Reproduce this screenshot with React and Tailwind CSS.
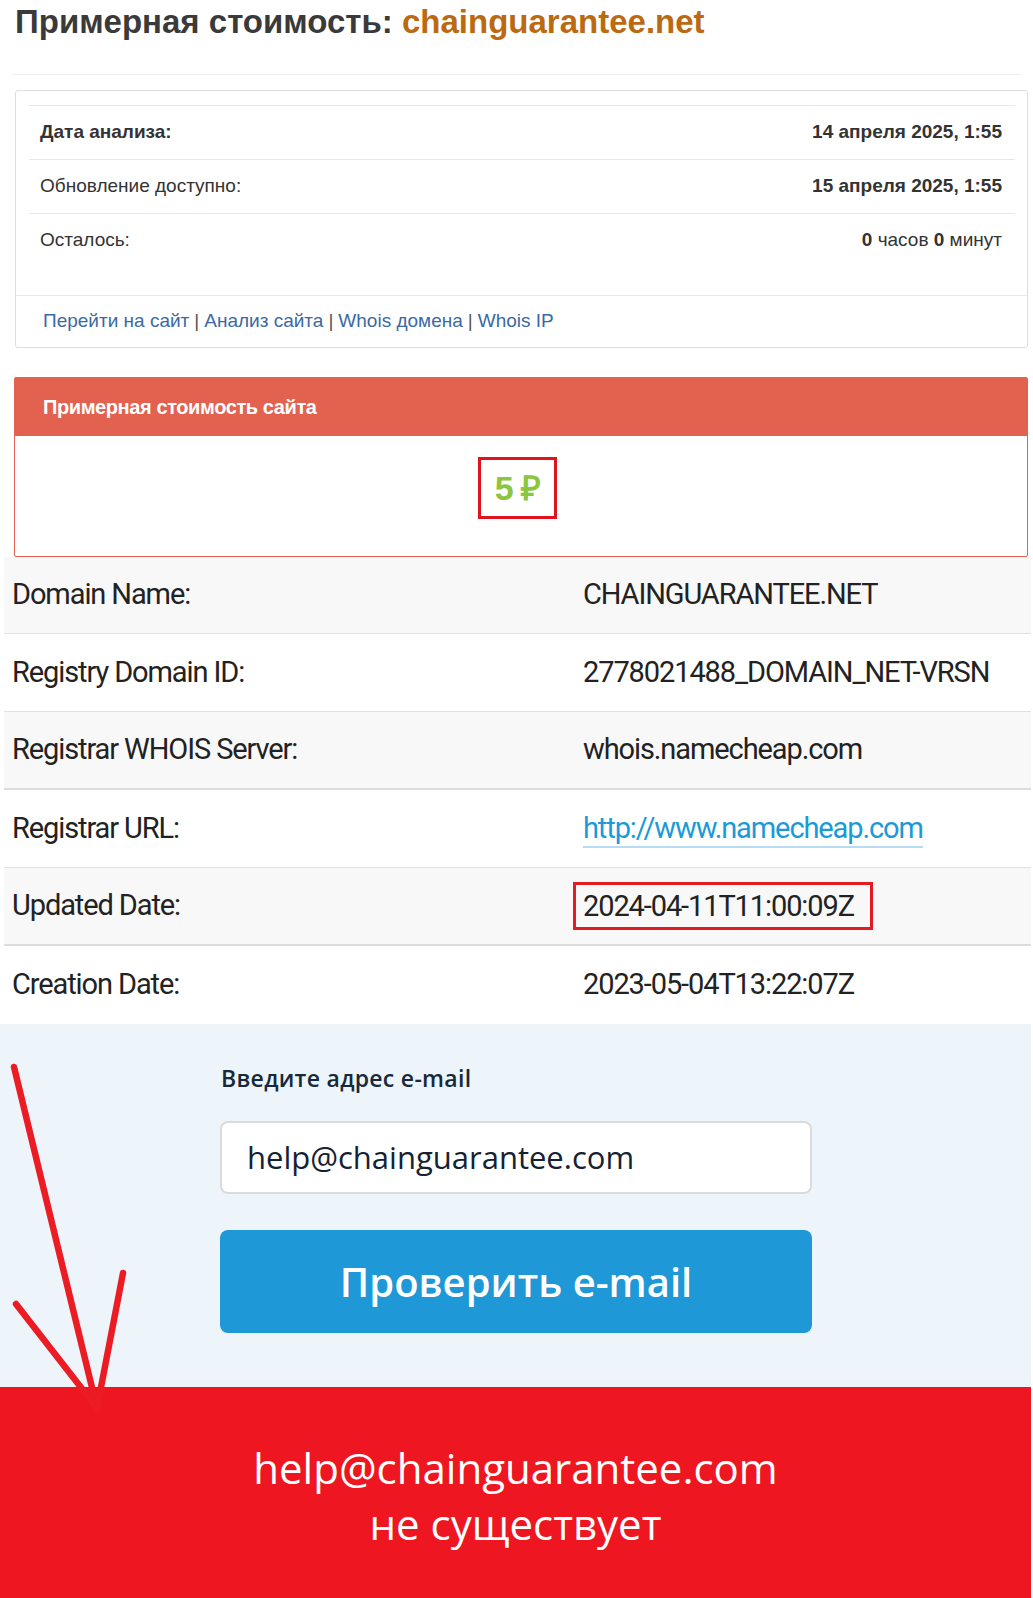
import React from 'react';

const info = [
  { label: 'Дата анализа:', bold: true, value: <b>14 апреля 2025, 1:55</b> },
  { label: 'Обновление доступно:', value: <b>15 апреля 2025, 1:55</b> },
  { label: 'Осталось:', value: <span><b>0</b> часов <b>0</b> минут</span> },
];

const links = ['Перейти на сайт', 'Анализ сайта', 'Whois домена', 'Whois IP'];

const whois = [
  { k: 'Domain Name:', v: 'CHAINGUARANTEE.NET' },
  { k: 'Registry Domain ID:', v: '2778021488_DOMAIN_NET-VRSN' },
  { k: 'Registrar WHOIS Server:', v: 'whois.namecheap.com', thick: true },
  { k: 'Registrar URL:', v: 'http://www.namecheap.com', link: true },
  { k: 'Updated Date:', v: '2024-04-11T11:00:09Z', mark: true, thick: true },
  { k: 'Creation Date:', v: '2023-05-04T13:22:07Z', last: true },
];

export default function App() {
  return (
    <div className="relative w-[1033px] min-h-[1598px] bg-white font-['Liberation_Sans',Arial,sans-serif] text-[#333]">
      {/* заголовок */}
      <div className="mx-[12px] h-[75px] border-b border-[#eeeeee]">
        <h1 className="pl-[3px] pt-[2px] text-[33px] leading-[40px] font-bold text-[#3a3a3a]">
          Примерная стоимость: <span className="text-[#bb6a12]">chainguarantee.net</span>
        </h1>
      </div>

      {/* даты анализа */}
      <div className="mt-[15px] ml-[15px] w-[1013px] h-[258px] border border-[#dddddd] rounded-[3px] flex flex-col">
        <div className="px-[13px] pt-[14px] pr-[12px] h-[204px]">
          {info.map((r, i) => (
            <div key={i} className="h-[54px] border-t border-[#e8e8e8] flex items-center justify-between pl-[11px] pr-[13px] text-[19px]">
              <span className={r.bold ? 'font-bold' : ''}>{r.label}</span>
              <span>{r.value}</span>
            </div>
          ))}
        </div>
        <div className="flex-1 border-t border-[#e8e8e8] flex items-center pl-[27px] text-[19px] text-[#555]">
          {links.map((l, i) => (
            <span key={i}>
              {i > 0 && <span className="mx-[5px]">|</span>}
              <a className="text-[#3a6aa2]">{l}</a>
            </span>
          ))}
        </div>
      </div>

      {/* стоимость */}
      <div className="mt-[29px] ml-[14px] w-[1014px] h-[180px] border border-[#e2614f] rounded-[2px] flex flex-col">
        <div className="h-[58px] bg-[#e3614f] flex items-center pl-[28px] text-white font-bold text-[20px] tracking-[-0.4px]">
          Примерная стоимость сайта
        </div>
        <div className="flex justify-center pt-[21px] pr-[7px]">
          <div className="w-[79px] h-[62px] border-[3px] border-[#e0141e] flex items-center justify-center text-[34px] font-bold text-[#8cc63e] tracking-[-1px]">
            5 ₽
          </div>
        </div>
      </div>

      {/* whois */}
      <div className="ml-[4px] w-[1027px] font-['Roboto',sans-serif] text-[29px] text-[#222] tracking-[-1.1px]">
        {whois.map((r, i) => (
          <div
            key={i}
            className={
              'flex items-center ' +
              (i === 0 ? 'h-[77px] ' : 'h-[78px] ') +
              (i % 2 === 0 ? 'bg-[#f8f8f8] ' : 'bg-white ') +
              (r.last ? '' : r.thick ? 'border-b-2 border-[#dcdcdc]' : 'border-b border-[#e2e2e2]')
            }
          >
            <div className="w-[579px] pl-[8px]">{r.k}</div>
            <div>
              {r.link ? (
                <span className="text-[#1b9ad8] border-b-2 border-[#b5dcf2] pb-[1px]">{r.v}</span>
              ) : r.mark ? (
                <span className="inline-block -ml-[10px] pl-[7px] pr-[16px] border-[3px] border-[#e31b23] leading-[42px]">{r.v}</span>
              ) : (
                r.v
              )}
            </div>
          </div>
        ))}
      </div>

      {/* проверка e-mail */}
      <div className="w-[1031px] bg-[#eef5fa] pt-[40px] pb-[54px] font-['Open_Sans',sans-serif]">
        <div className="ml-[220px] w-[592px]">
          <div className="text-[23px] leading-[29px] text-[#17293a] font-semibold tracking-[0.3px] pl-[1px]">
            Введите адрес e-mail
          </div>
          <div className="mt-[28px] h-[73px] bg-white border-2 border-[#d9dcdf] rounded-[8px] flex items-center pl-[25px] text-[31px] text-[#142233]">
            help@chainguarantee.com
          </div>
          <button className="mt-[36px] w-full h-[103px] bg-[#1e98d6] rounded-[8px] text-white text-[40px] font-semibold">
            Проверить e-mail
          </button>
        </div>
      </div>

      {/* результат */}
      <div className="w-[1031px] h-[211px] bg-[#ee1620] flex flex-col items-center pt-[53px] text-white font-['Open_Sans',sans-serif] text-[42px] leading-[56px]">
        <div>help@chainguarantee.com</div>
        <div>не существует</div>
      </div>

      {/* стрелка */}
      <svg className="absolute left-0 top-[1050px]" width="140" height="370" viewBox="0 1050 140 370">
        <g stroke="#ec1c24" strokeWidth="6.5" strokeLinecap="round" fill="none">
          <line x1="14" y1="1067" x2="97" y2="1408" />
          <line x1="16" y1="1304" x2="97" y2="1408" />
          <line x1="123" y1="1273" x2="97" y2="1408" />
        </g>
      </svg>
    </div>
  );
}
